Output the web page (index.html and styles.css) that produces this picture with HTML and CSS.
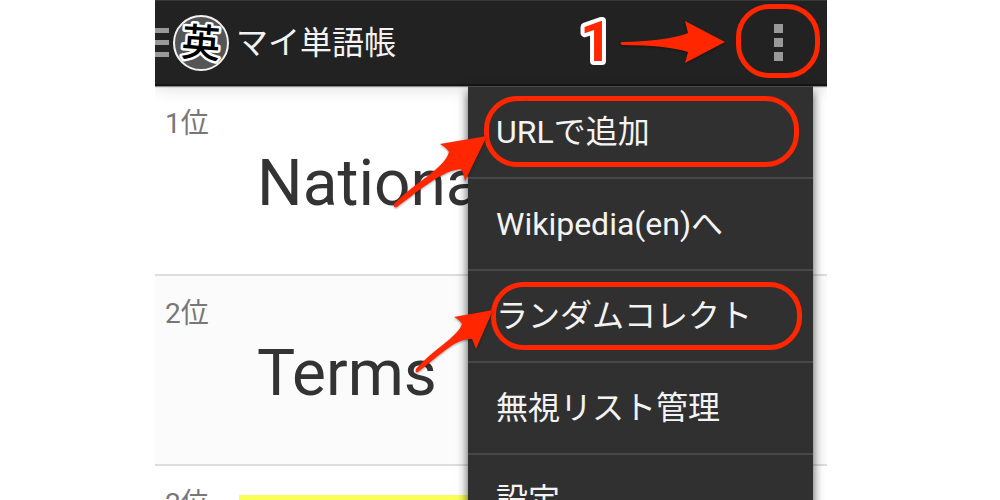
FILE: index.html
```html
<!DOCTYPE html>
<html lang="ja">
<head>
<meta charset="utf-8">
<meta name="viewport" content="width=device-width, initial-scale=1">
<title>マイ単語帳</title>
<link rel="stylesheet" href="styles.css">
</head>
<body>
<div class="page">
  <main class="device">
    <header class="bar">
      <button class="drawer" type="button" aria-label="ナビゲーション"><span></span><span></span><span></span></button>
      <svg class="logo" viewBox="0 0 58 60" aria-hidden="true">
        <circle cx="29" cy="30" r="27" fill="#555" stroke="#f2f2f2" stroke-width="2"/>
        <text class="logo-text" x="29" y="44" text-anchor="middle" transform="rotate(4 29 30)">英</text>
      </svg>
      <h1 class="title">マイ単語帳</h1>
      <button class="more" type="button" aria-label="メニュー"><span></span><span></span><span></span></button>
    </header>
    <ol class="words">
      <li class="word"><span class="rank">1位</span><span class="term">National</span></li>
      <li class="word alt"><span class="rank">2位</span><span class="term">Terms</span></li>
      <li class="word"><span class="rank">2位</span><span class="mark"></span></li>
    </ol>
    <nav class="menu" aria-label="メニュー">
      <button class="item" type="button">URLで追加</button>
      <button class="item" type="button">Wikipedia(en)へ</button>
      <button class="item" type="button">ランダムコレクト</button>
      <button class="item" type="button">無視リスト管理</button>
      <button class="item" type="button">設定</button>
    </nav>
    <svg class="notes" viewBox="155 0 672 500" aria-hidden="true">
      <g fill="none" stroke="#ff2600" stroke-width="5">
        <rect x="738.500" y="6.500" width="79" height="69" rx="31"/>
        <rect x="486.500" y="98.500" width="310" height="66" rx="31"/>
        <rect x="493.500" y="284.500" width="306" height="63" rx="30"/>
      </g>
      <g class="arrows" fill="#ff2600">
        <path d="M622 42 Q668 41 688 33 L685 21 L725 42 L685 63 L688 52 Q665 45 622 45 Q619 43 622 42Z"/>
        <path d="M394 204 C414 183 445 168 449 152 Q446 147 440 144 L487 136 L465 181 Q464 174 461 169 C443 170 421 189 397 207 Q393 208 394 204Z"/>
        <path d="M416 369 C432 350 458 337 462 324 Q460 320 454 317 L493 310 L476 349 L472 339 C455 338 439 356 418 372 Q415 373 416 369Z"/>
      </g>
      <text class="step" x="596" y="61" text-anchor="middle">1</text>
    </svg>
  </main>
</div>
</body>
</html>
```
FILE: styles.css
```css
* { box-sizing: border-box; }

body {
  margin: 0;
  background: #fff;
  font-family: Roboto, "Noto Sans CJK JP", sans-serif;
}

button {
  border: 0;
  padding: 0;
  background: none;
  font: inherit;
  color: inherit;
}

.page {
  display: grid;
  grid-template-columns: 155fr 672fr 173fr;
  height: 100vh;
  overflow: hidden;
}

.device {
  grid-column: 2;
  position: relative;
  min-width: 0;
  height: 100vh;
  overflow: hidden;
}

.bar {
  display: flex;
  align-items: center;
  height: 86px;
  padding-right: 32px;
  background: #222;
  border-top: 1px solid #383838;
  border-bottom: 2px solid #161616;
  box-shadow: 0 1px 1px #888, 0 2px 16px rgba(0, 0, 0, .14);
  color: #f3f3f3;
  position: relative;
}

.drawer {
  display: grid;
  gap: 7px;
  width: 14px;
  margin-right: 3px;
}

.drawer span {
  height: 5px;
  background: #999;
}

.logo {
  width: 58px;
  height: 60px;
}

.logo-text {
  font: 500 39px "Noto Sans CJK JP", sans-serif;
  fill: #000;
  stroke: #fff;
  stroke-width: 5px;
  stroke-linejoin: round;
  paint-order: stroke;
}

.title {
  flex: 1;
  margin: 0 0 0 6px;
  font-size: 32px;
  font-weight: 400;
  line-height: 40px;
}

.more {
  display: grid;
  justify-content: center;
  gap: 5px;
  width: 34px;
}

.more span {
  width: 9px;
  height: 9px;
  background: #999;
}

.words {
  list-style: none;
  margin: 0;
  padding: 0;
}

.word {
  display: grid;
  grid-template-columns: 84px 1fr;
  height: 190px;
  padding: 18px 14px 0 10px;
  border-bottom: 2px solid #ddd;
}

.word.alt { background: #fbfbfb; }

.rank {
  font-size: 28px;
  line-height: 40px;
  font-weight: 400;
  color: #777;
}

.term {
  padding: 44px 0 0 8px;
  font-size: 64px;
  line-height: 72px;
  color: #333;
}

.mark {
  margin-left: -10px;
  margin-top: 11px;
  background: #fbff55;
}

.menu {
  position: absolute;
  top: 86px;
  right: 14px;
  width: 345px;
  background: #303030;
  border-top: 1px solid #484848;
  box-shadow: 0 6px 10px rgba(0, 0, 0, .7);
}

.item {
  display: block;
  width: 100%;
  height: 92px;
  padding-left: 28px;
  border-bottom: 2px solid #484848;
  text-align: left;
  font-size: 32px;
  line-height: 40px;
  color: #f3f3f3;
}

.notes {
  position: absolute;
  top: 0;
  left: 0;
  width: 672px;
  height: 500px;
  pointer-events: none;
}

.arrows { filter: drop-shadow(0 1px 1px rgba(0, 0, 0, .4)); }

.step {
  font: 700 56px Roboto, sans-serif;
  fill: #ff2600;
  stroke: #fff;
  stroke-width: 8px;
  stroke-linejoin: round;
  paint-order: stroke;
}
```
